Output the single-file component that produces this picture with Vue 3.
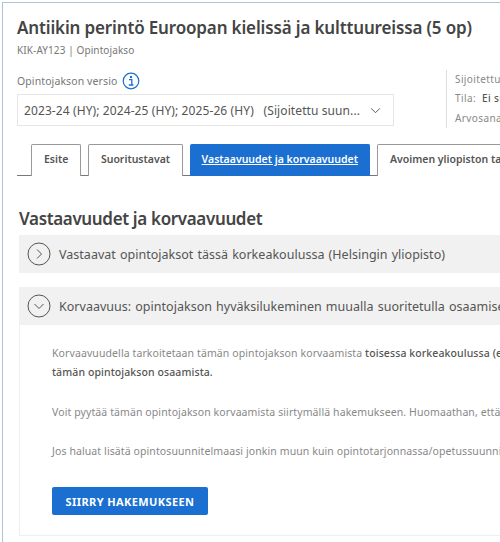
<script setup>
const tabs = [
  { label: 'Esite', cls: '' },
  { label: 'Suoritustavat', cls: 'narrow' },
  { label: 'Vastaavuudet ja korvaavuudet', cls: 'active' },
  { label: 'Avoimen yliopiston tarjonta', cls: '' }
]
</script>

<template>
  <div class="page">
    <div class="frame">
      <h1 class="title">Antiikin perintö Euroopan kielissä ja kulttuureissa (5 op)</h1>
      <div class="code">KIK-AY123 | Opintojakso</div>

      <div class="version-row">
        <div class="version">
          <div class="version-label">
            <span>Opintojakson versio</span>
            <svg class="info" viewBox="0 0 18 18" width="18" height="18">
              <circle cx="9" cy="9" r="7.8" fill="none" stroke="#1a6fd0" stroke-width="1.2" />
              <circle cx="9" cy="5" r="1.2" fill="#1a6fd0" />
              <path d="M7 7.6h2.8v5.2H11.400M6.800 13h4.600" fill="none" stroke="#1a6fd0" stroke-width="1.300" />
            </svg>
          </div>
          <div class="select">
            <span class="select-text">2023-24 (HY); 2024-25 (HY); 2025-26 (HY) &nbsp;&nbsp;(Sijoitettu suun...</span>
            <svg class="chev" viewBox="0 0 12 8" width="11" height="7">
              <path d="M1 1.500l5 5 5-5" fill="none" stroke="#555" stroke-width="1.100" />
            </svg>
          </div>
        </div>
        <div class="status">
          <div>Sijoitettu suunnitelmaan</div>
          <div>Tila: <b>Ei suoritettu</b></div>
          <div>Arvosana: -</div>
        </div>
      </div>

      <div class="tabs">
        <div v-for="t in tabs" :key="t.label" class="tab" :class="t.cls">{{ t.label }}</div>
      </div>

      <h2 class="section">Vastaavuudet ja korvaavuudet</h2>

      <div class="acc">
        <svg viewBox="0 0 24 24" width="24" height="24">
          <circle cx="12" cy="12" r="11" fill="none" stroke="#555" stroke-width="1" />
          <path d="M10 7.500l4.500 4.500-4.500 4.500" fill="none" stroke="#555" stroke-width="1" />
        </svg>
        <span>Vastaavat opintojaksot tässä korkeakoulussa (Helsingin yliopisto)</span>
      </div>

      <div class="acc second">
        <svg viewBox="0 0 24 24" width="24" height="24">
          <circle cx="12" cy="12" r="11" fill="none" stroke="#555" stroke-width="1" />
          <path d="M7.500 10l4.500 4.500 4.500-4.500" fill="none" stroke="#555" stroke-width="1" />
        </svg>
        <span>Korvaavuus: opintojakson hyväksilukeminen muualla suoritetulla osaamisella</span>
      </div>

      <div class="panel">
        <p class="p1">Korvaavuudella tarkoitetaan tämän opintojakson korvaamista <b>toisessa korkeakoulussa (esim. toisessa yliopistossa) suoritetulla</b><br /><b>tämän opintojakson osaamista.</b></p>
        <p>Voit pyytää tämän opintojakson korvaamista siirtymällä hakemukseen. Huomaathan, että korvaavuutta haetaan erikseen.</p>
        <p>Jos haluat lisätä opintosuunnitelmaasi jonkin muun kuin opintotarjonnassa/opetussuunnitelmassa olevan opintojakson</p>
        <button class="cta">SIIRRY HAKEMUKSEEN</button>
      </div>
    </div>
  </div>
</template>

<style scoped>
.page {
  width: 500px;
  height: 542px;
  overflow: hidden;
  background: #fff;
  font-family: "Noto Sans", "Open Sans", sans-serif;
  color: #4a4a4a;
}
.frame {
  box-sizing: border-box;
  width: 620px;
  height: 540px;
  margin: 2px 0 0 2px;
  border-top: 1px solid #a9c3dc;
  border-left: 1px solid #a9c3dc;
  padding: 14px 0 0 14px;
  white-space: nowrap;
}
.title {
  margin: 0;
  font-size: 17px;
  line-height: 22px;
  font-weight: 600;
  color: #444;
  letter-spacing: -0.15px;
}
.code {
  margin-top: 4px;
  font-size: 10px;
  line-height: 14px;
  color: #777;
  letter-spacing: 0.1px;
}
.version-row {
  display: flex;
  margin-top: 5px;
  height: 65px;
  align-items: flex-end;
}
.version { width: 377px; padding-bottom: 1px; }
.version-label {
  display: flex;
  align-items: center;
  gap: 5px;
  height: 19px;
  font-size: 10.500px;
  color: #777;
  letter-spacing: 0.1px;
}
.select {
  box-sizing: border-box;
  margin-top: 4px;
  height: 32px;
  border: 1px solid #e6e6e6;
  display: flex;
  align-items: center;
  justify-content: space-between;
  padding: 0 12px 0 6px;
  font-size: 12px;
  color: #555;
}
.select-text { letter-spacing: 0.1px; }
.status {
  align-self: flex-end;
  margin-left: 52px;
  margin-bottom: -1px;
  padding-left: 8px;
  border-left: 1px solid #ddd;
  font-size: 10px;
  line-height: 19.500px;
  color: #888;
  letter-spacing: 0.4px;
}
.status b { font-weight: 500; color: #555; margin-left: 3px; }
.tabs {
  display: flex;
  gap: 7px;
  margin-top: 17px;
  padding-left: 14px;
  border-bottom: 1px solid #777;
  height: 31px;
}
.tab {
  box-sizing: border-box;
  height: 32px;
  padding: 0 12px;
  border: 1px solid #999;
  border-bottom: none;
  border-radius: 2px 2px 0 0;
  font-size: 10.500px;
  line-height: 28px;
  font-weight: 600;
  color: #555;
  background: #fff;
}
.tab.narrow { padding: 0 11.500px; }
.tab.active {
  background: #1a6fd0;
  border-color: #1a6fd0;
  color: #fff;
  text-decoration: underline;
  padding: 0 11px;
}
.section {
  margin: 32px 0 0 2px;
  font-size: 17px;
  line-height: 22px;
  font-weight: 600;
  color: #444;
  letter-spacing: -0.35px;
}
.acc {
  display: flex;
  align-items: center;
  gap: 8px;
  height: 38px;
  margin: 5px 0 0 2px;
  padding-left: 8px;
  background: #f1f1f1;
  font-size: 12.500px;
  color: #555;
  word-spacing: 0.800px;
}
.acc span { letter-spacing: 0.02px; }
.acc.second { margin-top: 14px; }
.panel {
  box-sizing: border-box;
  margin-left: 2px;
  height: 211px;
  padding: 19px 0 0 32px;
  border-left: 1px solid #eee;
  border-bottom: 1px solid #eee;
  font-size: 10.500px;
  color: #888;
}
.panel p {
  margin: 0 0 20.500px;
  line-height: 19px;
  letter-spacing: 0.1px;
}
.panel b { font-weight: 500; color: #555; }
.cta {
  display: block;
  width: 156px;
  height: 28px;
  margin-top: 26px;
  border: none;
  border-radius: 2px;
  background: #1a6fd0;
  color: #fff;
  font: 700 11px "Noto Sans", sans-serif;
  letter-spacing: 0.4px;
}
</style>
